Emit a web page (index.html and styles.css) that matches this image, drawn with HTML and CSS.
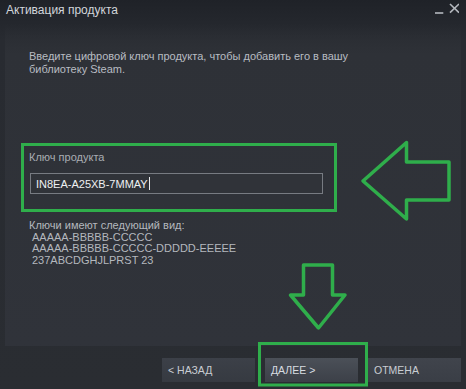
FILE: index.html
```html
<!DOCTYPE html>
<html>
<head lang="ru">
    <meta charset="UTF-8">
    <title>Активация продукта</title>
    <link rel="stylesheet" href="styles.css">
</head>
<body>
<div class="window">
    <div class="titlebar">
        <span class="title">Активация продукта</span>
        <div class="controls">
            <svg width="30" height="16" viewBox="0 0 30 16">
                <line x1="6" y1="13" x2="14.3" y2="13" stroke="#b4b8be" stroke-width="1.6"/>
                <line x1="21" y1="4" x2="30" y2="12.7" stroke="#b4b8be" stroke-width="1.6"/>
                <line x1="30" y1="4" x2="21" y2="12.7" stroke="#b4b8be" stroke-width="1.6"/>
            </svg>
        </div>
    </div>
    <div class="panel">
        <p class="intro">Введите цифровой ключ продукта, чтобы добавить его в вашу<br>библиотеку Steam.</p>
        <div class="keybox">
            <div class="label">Ключ продукта</div>
            <div class="input"><span class="value">IN8EA-A25XB-7MMAY</span><span class="caret"></span></div>
        </div>
        <div class="formats">
            <div class="formats-title">Ключи имеют следующий вид:</div>
            <div class="formats-list">
                <div>AAAAA-BBBBB-CCCCC</div>
                <div>AAAAA-BBBBB-CCCCC-DDDDD-EEEEE</div>
                <div>237ABCDGHJLPRST 23</div>
            </div>
        </div>
    </div>
    <div class="footer">
        <a href="#" class="btn btn-back">&lt; НАЗАД</a>
        <a href="#" class="btn btn-next">ДАЛЕЕ &gt;</a>
        <a href="#" class="btn">ОТМЕНА</a>
    </div>
    <svg class="marks" width="466" height="389" viewBox="0 0 466 389">
        <polygon points="363,181 406.5,142.5 406.5,162 449,162 449,200 406.5,200 406.5,219" fill="none" stroke="#2fae4b" stroke-width="3.5" stroke-linejoin="round"/>
        <polygon points="303.5,265 332.5,265 332.5,295 345,295 318.5,328 290.5,295 303.5,295" fill="none" stroke="#2fae4b" stroke-width="3.5" stroke-linejoin="round"/>
        <rect x="259.5" y="343.5" width="107" height="41.5" fill="none" stroke="#2fae4b" stroke-width="3"/>
    </svg>
</div>
</body>
</html>
```

FILE: styles.css
```css
body {
    margin: 0px;
    background: #2a2d32;
    font-family: "Liberation Sans", Arial, sans-serif;
}
.window {
    position: relative;
    width: 466px;
    height: 389px;
    overflow: hidden;
    background: linear-gradient(to bottom, #1f2228 0px, #282b31 40px, #2a2d32 100%);
}
.titlebar {
    height: 24px;
    display: flex;
    justify-content: space-between;
    align-items: flex-start;
}
.title {
    padding: 3px 0px 0px 6px;
    font-size: 12px;
    line-height: 14px;
    color: #d2d6db;
}
.controls {
    padding-right: 7px;
}
.controls svg {
    display: block;
}
.panel {
    margin: 0px 5px;
    height: 322px;
    padding: 26px 0px 0px 24px;
    box-sizing: border-box;
    background: linear-gradient(to bottom, rgba(48, 51, 58, 0) 0px, #2e3137 30px, #30333a 100%);
}
.intro {
    margin: 0px;
    font-size: 11px;
    line-height: 13px;
    color: #b8bcc2;
}
.keybox {
    margin: 67px 0px 0px -8px;
    width: 316px;
    box-sizing: border-box;
    border: 3px solid #2fae4b;
    padding: 5px 0px 15px 5px;
}
.label {
    font-size: 11px;
    line-height: 13px;
    color: #a9adb3;
}
.input {
    margin: 9px 0px 0px 1px;
    width: 293px;
    height: 21px;
    box-sizing: border-box;
    border: 1px solid #777b82;
    background: #303339;
    padding-left: 5px;
    display: flex;
    align-items: center;
    font-size: 11px;
    color: #eef0f2;
}
.caret {
    width: 1px;
    height: 13px;
    margin-left: 1px;
    background: #e8eaec;
}
.formats {
    margin-top: 8px;
    font-size: 11px;
    line-height: 11.5px;
    color: #b4b8be;
}
.formats-list {
    padding-left: 3px;
}
.footer {
    display: flex;
    justify-content: flex-end;
    gap: 10px;
    margin: 12px 5px 0px 0px;
}
.btn {
    width: 93px;
    height: 24px;
    box-sizing: border-box;
    padding-left: 6px;
    display: flex;
    align-items: center;
    font-size: 10.5px;
    color: #c9cdd3;
    text-decoration: none;
    background: linear-gradient(to bottom, #40444c, #3a3e46);
}
.btn-back {
    background: linear-gradient(to bottom, #3c4048, #363a41);
}
.btn-next {
    color: #d8dce1;
    background: linear-gradient(to bottom, #4b5058, #3c4048);
}
.marks {
    position: absolute;
    left: 0px;
    top: 0px;
    pointer-events: none;
}
```
